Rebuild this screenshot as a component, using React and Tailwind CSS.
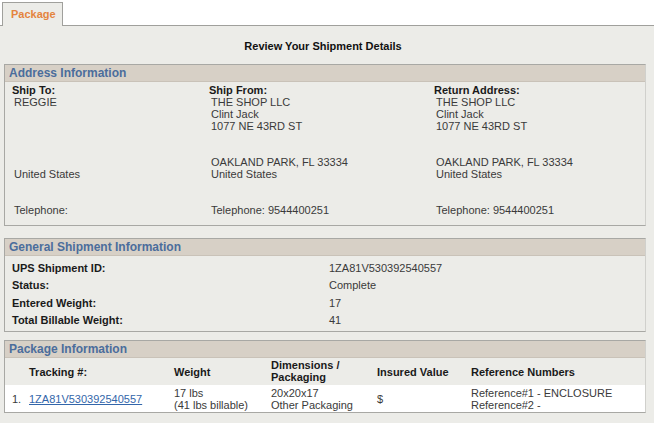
import React from 'react';

const Section = ({ title, children, className = '' }) => (
    <div className={`mx-[4px] w-[642px] border border-[#a8a8a4] border-r-[#d0d0cc] ${className}`}>
        <div className="h-[17px] bg-[#d7d0c6] border-b border-[#c9c2b8] pl-[4px] text-[12px] leading-[17px] font-bold text-[#4b6d9c]">
            {title}
        </div>
        {children}
    </div>
);

const Line = ({ children, bold, indent }) => (
    <div className={`h-[12px] leading-[12px] whitespace-nowrap ${bold ? 'font-bold text-[#1a1a1a]' : 'text-[#3a3a3a]'} ${indent ? 'pl-[2px]' : ''}`}>
        {children || '\u00a0'}
    </div>
);

const AddressColumn = ({ label, lines, width }) => (
    <div className={width}>
        <Line bold>{label}</Line>
        {lines.map((l, i) => (
            <Line key={i} indent>{l}</Line>
        ))}
    </div>
);

const generalRows = [
    ['UPS Shipment ID:', '1ZA81V530392540557'],
    ['Status:', 'Complete'],
    ['Entered Weight:', '17'],
    ['Total Billable Weight:', '41'],
];

const App = () => {
    const shopLines = ['THE SHOP LLC', 'Clint Jack', '1077 NE 43RD ST', '', '', 'OAKLAND PARK, FL 33334', 'United States', '', '', 'Telephone: 9544400251'];

    return (
        <div className="w-[654px] h-[423px] overflow-hidden bg-[#ecece8] text-[11px] text-[#333]" style={{ fontFamily: '"Liberation Sans", Arial, sans-serif' }}>
            {/* Tab strip */}
            <div className="h-[26px] bg-white flex items-end border-b border-[#a0a09c]">
                <div className="ml-[2px] w-[61px] h-[24px] -mb-px bg-[#ecece8] border border-b-0 border-[#a0a09c] pl-[8px] text-[11px] leading-[22px] font-bold text-[#e4843e]">
                    Package
                </div>
            </div>

            {/* Title */}
            <div className="pt-[13px] h-[38px] text-center font-bold text-[#111] leading-[14px] pr-[8px]">
                Review Your Shipment Details
            </div>

            {/* Address Information */}
            <Section title="Address Information">
                <div className="flex pl-[7px] pt-[2px] pb-[9px]">
                    <AddressColumn
                        label="Ship To:"
                        width="w-[197px]"
                        lines={['REGGIE', '', '', '', '', '', 'United States', '', '', 'Telephone:']}
                    />
                    <AddressColumn label="Ship From:" width="w-[225px]" lines={shopLines} />
                    <AddressColumn label="Return Address:" width="flex-1" lines={shopLines} />
                </div>
            </Section>

            {/* General Shipment Information */}
            <Section title="General Shipment Information" className="mt-[12px]">
                <div className="pt-[3px] pb-[2px]">
                    {generalRows.map(([label, value]) => (
                        <div key={label} className="flex h-[17.6px] items-center pl-[7px]">
                            <div className="w-[317px] font-bold text-[#1a1a1a]">{label}</div>
                            <div className="text-[#3a3a3a]">{value}</div>
                        </div>
                    ))}
                </div>
            </Section>

            {/* Package Information */}
            <Section title="Package Information" className="mt-[8px]">
                <div className="flex h-[27px] items-center font-bold text-[#1a1a1a] leading-[12px]">
                    <div className="w-[24px]" />
                    <div className="w-[145px]">Tracking #:</div>
                    <div className="w-[97px]">Weight</div>
                    <div className="w-[106px] pb-[1px]">Dimensions /<br />Packaging</div>
                    <div className="w-[94px]">Insured Value</div>
                    <div>Reference Numbers</div>
                </div>
                <div className="flex h-[27px] items-center bg-white leading-[12px] text-[#3a3a3a]">
                    <div className="w-[24px] pl-[7px]">1.</div>
                    <div className="w-[145px]">
                        <a href="#" className="text-[#3366aa] underline">1ZA81V530392540557</a>
                    </div>
                    <div className="w-[97px]">17 lbs<br />(41 lbs billable)</div>
                    <div className="w-[106px]">20x20x17<br />Other Packaging</div>
                    <div className="w-[94px] text-[#3a3a3a]">$</div>
                    <div>Reference#1 - ENCLOSURE<br />Reference#2 -</div>
                </div>
            </Section>
        </div>
    );
};

export default App;
